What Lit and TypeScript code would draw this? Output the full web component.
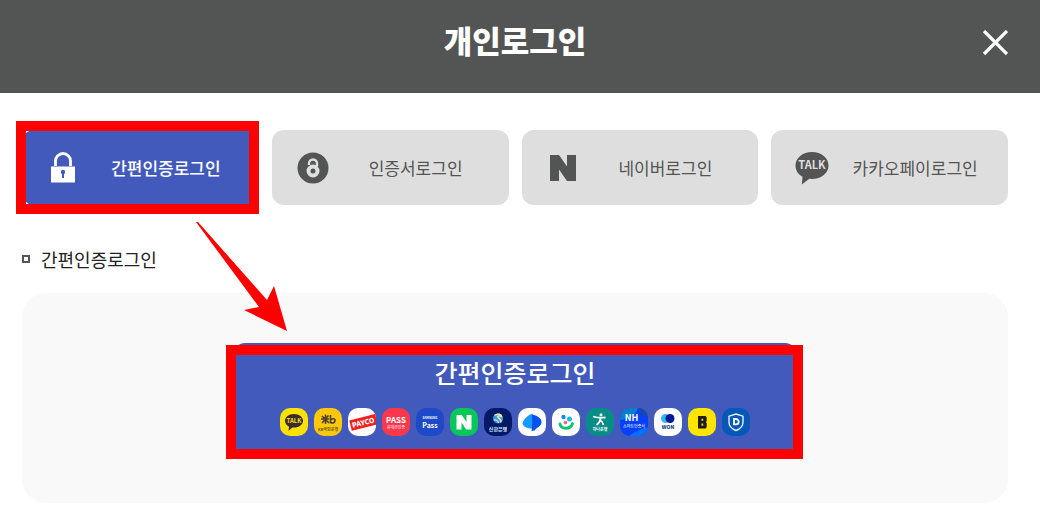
import { LitElement, html, css, svg } from "lit";
import { customElement, state } from "lit/decorators.js";

const lockIcon = html`<svg class="tab-icon" viewBox="0 0 34 34" aria-hidden="true">
  <path d="M9.5 15V10a7.5 7.5 0 0 1 15 0V15" fill="none" stroke="currentColor" stroke-width="2.800" />
  <path d="M5 15.500h24v16H5z" fill="currentColor" />
  <circle cx="17" cy="21" r="2.200" fill="#435abd" />
  <path d="M16 21h2v6h-2z" fill="#435abd" />
</svg>`;

const certIcon = html`<svg class="tab-icon" viewBox="0 0 34 34" aria-hidden="true">
  <circle cx="17" cy="17" r="15.500" fill="currentColor" />
  <path d="M13 14v-1.500a4 4 0 0 1 8 0v3" fill="none" stroke="#dedede" stroke-width="2.400" />
  <circle cx="17" cy="20" r="4.500" fill="none" stroke="#dedede" stroke-width="4" />
  <circle cx="17" cy="20" r="1.600" fill="currentColor" />
</svg>`;

const naverIcon = html`<svg class="tab-icon" viewBox="0 0 34 34" aria-hidden="true">
  <path d="M4 4h9l8 11.500V4h9v26h-9l-8-11.500V30H4z" fill="currentColor" />
</svg>`;

const talkIcon = html`<svg class="tab-icon" viewBox="0 0 34 34" aria-hidden="true">
  <path d="M17 1C7.500 1 .500 7 .500 14.500c0 5 2.800 9 7 11.300L6.800 33.500l7.500-5.700 2.700.200c9.500 0 16.500-6 16.500-13.500S26.500 1 17 1z" fill="currentColor" />
  <text x="17" y="18" text-anchor="middle" font-size="11" font-weight="700" fill="#dedede">TALK</text>
</svg>`;

const tabs = [
  { label: "간편인증로그인", icon: lockIcon },
  { label: "인증서로그인", icon: certIcon },
  { label: "네이버로그인", icon: naverIcon },
  { label: "카카오페이로그인", icon: talkIcon },
];

const providers = [
  {
    fill: "#fae100",
    art: svg`<path d="M14 6c-5.200 0-9 3-9 6.800 0 2.600 1.600 4.700 4 5.900l-.500 4 4-3.200 1.500.100c5.200 0 9-3 9-6.800S19.200 6 14 6z" fill="#3b2b2f"/>
      <text x="14" y="15" font-size="6" font-weight="700" fill="#fae100">TALK</text>`,
  },
  {
    fill: "#fdc70c",
    art: svg`<path d="M8 8l7 7M14.500 7.500L8 15M11.500 6.500V16M7 11h8M16.500 7v8.500M17 11.500c3-1.500 4.500-.500 4 1.500s-2.500 2.500-4 1.500" fill="none" stroke="#4b4332" stroke-width="1.600"/>
      <text x="14" y="22.500" font-size="4" font-weight="700" fill="#6b5a22">KB국민은행</text>`,
  },
  {
    fill: "#fff",
    art: svg`<g transform="rotate(-14 14 14)"><path d="M2 9.500h28v10.500H2z" fill="#f21d1d"/>
      <text x="15" y="17.500" font-size="7" font-weight="900" fill="#fff">PAYCO</text></g>`,
  },
  {
    fill: "#fc374b",
    art: svg`<text x="14" y="15" font-size="8" font-weight="700" fill="#fff">PASS</text>
      <text x="14" y="21" font-size="4" fill="#fff">휴대폰인증</text>`,
  },
  {
    fill: "#1e49c8",
    art: svg`<text x="14" y="11" font-size="3" font-weight="700" fill="#fff">SAMSUNG</text>
      <text x="14" y="20" font-size="7" font-weight="700" fill="#fff">Pass</text>`,
  },
  {
    fill: "#05c75a",
    art: svg`<path d="M6.500 7h5.300l4.700 7V7h5v14.500h-5.300l-4.700-7v7h-5z" fill="#fff"/>`,
  },
  {
    fill: "#001a68",
    art: svg`<circle cx="14" cy="10.500" r="5" fill="#3999d2"/>
      <path d="M10.500 7.500c3-2.500 7-1 7 1-2.500-1.300-5-.500-3.500 1s4 2.500 2.500 5" fill="none" stroke="#ebe4b3" stroke-width="1.500"/>
      <path d="M10 12c2-.500 4 .500 4.500 3" fill="none" stroke="#fff" stroke-width="1"/>
      <text x="14" y="23" font-size="5" font-weight="700" fill="#dce3fa">신한은행</text>`,
  },
  {
    fill: "#fff",
    art: svg`<path d="M14.500 5.500v15C9 20.500 5 18.500 4.500 15.500 5.500 11 10 7 14.500 5.500z" fill="#159bff"/>
      <path d="M14 6.500c5 1 9.500 3.500 9.500 7.500 0 4.500-4.500 5-7 8.500l-3 .500c1-5 .500-11 .500-16.500z" fill="#0752ee"/>`,
  },
  {
    fill: "#fff",
    art: svg`<circle cx="11.500" cy="9" r="2.200" fill="#168bec"/><circle cx="17.500" cy="11" r="2.500" fill="#18b9e4"/>
      <circle cx="13.500" cy="14.500" r="1.700" fill="#f25693"/>
      <path d="M8 16c1 5.500 10.500 6 12.500-.500" fill="none" stroke="#0bc66e" stroke-width="2.800" stroke-linecap="round"/>`,
  },
  {
    fill: "#078c86",
    art: svg`<circle cx="15" cy="6.800" r="1.500" fill="#fff"/>
      <path d="M7 8.500c5 1.500 8 1.500 12.500 1M14.500 9.500c0 3-2 6-4 7.500M14 12c2 1 3 2.500 3.500 5" fill="none" stroke="#fff" stroke-width="1.800"/>
      <text x="14" y="22.500" font-size="4" font-weight="700" fill="#fff">하나은행</text>`,
  },
  {
    fill: "#063ffc",
    art: svg`<path d="M0 0h18c-2 7-8 11-18 12z" fill="#087dca"/><path d="M18 0h10v10c-5-2-8-5-10-10z" fill="#1b48a8"/>
      <path d="M9 28c4-3 11-7 19-9v9z" fill="#086fff"/>
      <text x="11.500" y="13" font-size="9" font-weight="700" fill="#fff">NH</text>
      <text x="14" y="20" font-size="4" fill="#fff">스마트인증서</text>`,
  },
  {
    fill: "#fff",
    art: svg`<circle cx="11.500" cy="10.500" r="4.500" fill="#30b9f4"/><circle cx="16" cy="10.500" r="4.500" fill="#061a92"/>
      <text x="14" y="20.500" font-size="5" font-weight="900" fill="#18418d">WON</text>`,
  },
  {
    fill: "#fee500",
    art: svg`<path fill-rule="evenodd" d="M10 8h7.500l1.200 1.200V13l-.900 1 .900 1v4.200L17.500 20.500H10zM13.500 10.700v2h1.700v-2zM13.500 15.500v2.200h1.700v-2.200z" fill="#201d1e"/>`,
  },
  {
    fill: "#0557b8",
    art: svg`<path d="M14 6l7 2.200V14c0 4-3 7-7 8.500C10 21 7 18 7 14V8.200z" fill="none" stroke="#e8f4ff" stroke-width="1.400"/>
      <path d="M12 11h2a2.700 2.700 0 0 1 0 5.400H12z" fill="none" stroke="#fff" stroke-width="1.800"/>`,
  },
];

@customElement("app-root")
export class AppRoot extends LitElement {
  @state() private selected = 0;

  static styles = css`
    :host {
      display: block;
      color: #222;
      background: #fff;
      font-family: "Noto Sans CJK KR", "Noto Sans", sans-serif;
    }
    * { box-sizing: border-box; }
    button {
      border: 0;
      margin: 0;
      font-family: inherit;
      cursor: pointer;
    }
    .header {
      display: grid;
      grid-template-columns: 1fr;
      align-items: center;
      height: 93px;
      padding: 0 32px 8px 22px;
      background: #535554;
      color: #fff;
    }
    .title {
      grid-area: 1 / 1;
      margin: 0;
      padding-bottom: 6px;
      font-size: 31px;
      line-height: 44px;
      font-weight: 900;
      text-align: center;
    }
    .close {
      grid-area: 1 / 1;
      justify-self: end;
      display: block;
      width: 26px;
      height: 26px;
      padding: 0;
      background: none;
      color: #fff;
    }
    .close-icon { display: block; width: 26px; height: 26px; }
    .content { position: relative; padding: 37px 32px 7px 22px; }
    .tabs {
      display: grid;
      grid-template-columns: repeat(4, 1fr);
      gap: 13px;
    }
    .tab-cell { position: relative; display: grid; }
    .tab {
      display: flex;
      align-items: center;
      height: 75px;
      padding: 0 7px 0 24px;
      border-radius: 12px;
      background: #dedede;
      color: #535554;
      font-size: 17px;
      line-height: 24px;
      font-weight: 400;
    }
    .tab.active { background: #435abd; color: #fff; font-weight: 500; }
    .tab-icon { flex: none; width: 34px; height: 34px; }
    .tab-label { flex: 1; text-align: center; white-space: nowrap; }
    .mark {
      position: absolute;
      border: 10px solid #f00;
      pointer-events: none;
    }
    .mark-tab { inset: -9px 0 -9px -6px; }
    .mark-banner { inset: 2px -6px -6px -7px; }
    .arrow {
      position: absolute;
      left: 196px;
      top: 129px;
      width: 92px;
      height: 110px;
      pointer-events: none;
    }
    .subtitle {
      display: flex;
      align-items: center;
      gap: 11px;
      margin: 40px 0 20px;
      font-size: 18px;
      line-height: 28px;
      font-weight: 400;
    }
    .bullet { width: 8px; height: 8px; border: 2px solid #555; }
    .panel {
      display: flex;
      justify-content: center;
      padding: 50px 24px;
      border-radius: 24px;
      background: #f9f9f9;
    }
    .banner-wrap { position: relative; display: flex; }
    .banner {
      display: flex;
      flex-direction: column;
      align-items: center;
      gap: 18px;
      height: 110px;
      padding: 11px 47px 0;
      border-radius: 12px;
      background: #435abd;
      color: #fff;
    }
    .banner-label { font-size: 25px; line-height: 36px; font-weight: 500; }
    .providers { display: flex; gap: 6px; }
    .provider { display: block; width: 28px; height: 28px; border-radius: 10px; }
    .provider text { text-anchor: middle; }
  `;

  render() {
    return html`
      <header class="header">
        <h1 class="title">개인로그인</h1>
        <button class="close" type="button" aria-label="닫기">
          <svg class="close-icon" viewBox="0 0 26 26" aria-hidden="true">
            <path d="M2 1l23 23M25 1L2 24" stroke="currentColor" stroke-width="3.200" />
          </svg>
        </button>
      </header>
      <main class="content">
        <nav class="tabs">
          ${tabs.map(
            (tab, i) => html`<div class="tab-cell">
              <button
                type="button"
                class="tab ${i === this.selected ? "active" : ""}"
                aria-pressed=${i === this.selected}
                @click=${() => (this.selected = i)}
              >
                ${tab.icon}<span class="tab-label">${tab.label}</span>
              </button>
              ${i === 0 ? html`<span class="mark mark-tab"></span>` : ""}
            </div>`
          )}
        </nav>
        <h2 class="subtitle"><span class="bullet"></span>${tabs[0].label}</h2>
        <section class="panel">
          <div class="banner-wrap">
            <button class="banner" type="button">
              <span class="banner-label">간편인증로그인</span>
              <span class="providers">
                ${providers.map(
                  (p) => html`<svg class="provider" viewBox="0 0 28 28" aria-hidden="true">
                    <rect width="28" height="28" fill=${p.fill} />${p.art}
                  </svg>`
                )}
              </span>
            </button>
            <span class="mark mark-banner"></span>
          </div>
        </section>
        <svg class="arrow" viewBox="0 0 92 110" aria-hidden="true">
          <path d="M0 0h2l69 78 7-14 13 45-43-21 15-3z" fill="#f00" />
        </svg>
      </main>
    `;
  }
}
